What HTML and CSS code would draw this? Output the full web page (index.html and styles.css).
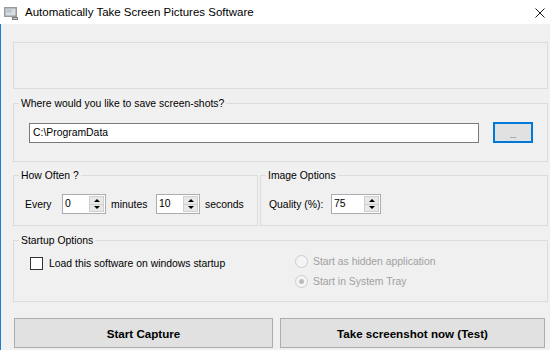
FILE: index.html
```html
<!DOCTYPE html>
<html lang="en">
<head>
    <meta charset="UTF-8">
    <title>Automatically Take Screen Pictures Software</title>
    <link rel="stylesheet" href="styles.css">
</head>
<body>
<div class="window">
    <div class="titlebar">
        <svg class="app-icon" width="16" height="16" viewBox="0 0 16 16">
            <rect x="1" y="2" width="13" height="10" fill="#9a9a9a"/>
            <rect x="2.5" y="3.5" width="10" height="7" fill="#d8dde3"/>
            <rect x="3.5" y="4.5" width="5" height="3" fill="#b9c2cc"/>
            <path d="M9 12 L15 12 L15 15 L9 15 Z" fill="#7d7d7d"/>
            <rect x="10" y="13" width="4" height="1" fill="#c8c8c8"/>
        </svg>
        <span class="title">Automatically Take Screen Pictures Software</span>
        <svg class="close" width="10" height="10" viewBox="0 0 10 10">
            <path d="M0.5 0.5 L9.5 9.5 M9.5 0.5 L0.5 9.5" stroke="#1a1a1a" stroke-width="1"/>
        </svg>
    </div>

    <div class="client">
        <div class="banner"></div>

        <fieldset class="group">
            <legend>Where would you like to save screen-shots?</legend>
            <div class="save-row">
                <div class="textbox">C:\ProgramData</div>
                <button class="browse">...</button>
            </div>
        </fieldset>

        <div class="options">
            <fieldset class="group">
                <legend>How Often ?</legend>
                <div class="often-row">
                    <span>Every</span>
                    <div class="spin"><span class="val">0</span><span class="arrows"><i class="up"></i><i class="down"></i></span></div>
                    <span class="unit">minutes</span>
                    <div class="spin"><span class="val">10</span><span class="arrows"><i class="up"></i><i class="down"></i></span></div>
                    <span class="unit">seconds</span>
                </div>
            </fieldset>
            <fieldset class="group">
                <legend>Image Options</legend>
                <div class="quality-row">
                    <span>Quality (%):</span>
                    <div class="spin"><span class="val">75</span><span class="arrows"><i class="up"></i><i class="down"></i></span></div>
                </div>
            </fieldset>
        </div>

        <fieldset class="group startup">
            <legend>Startup Options</legend>
            <div class="startup-grid">
                <label class="check"><span class="box"></span>Load this software on windows startup</label>
                <div class="radios">
                    <label class="radio"><span class="dot"></span>Start as hidden application</label>
                    <label class="radio checked"><span class="dot"></span>Start in System Tray</label>
                </div>
            </div>
        </fieldset>

        <div class="actions">
            <button class="action">Start Capture</button>
            <button class="action">Take screenshot now (Test)</button>
        </div>
    </div>
</div>
</body>
</html>
```

FILE: styles.css
```css
* {
    margin: 0;
    padding: 0;
    box-sizing: border-box;
}

body {
    font-family: "Liberation Sans", Arial, sans-serif;
    font-size: 10.4px;
    color: #000;
    background: #f0f0f0;
    width: 550px;
    height: 350px;
    overflow: hidden;
}

.window {
    height: 350px;
    display: flex;
    flex-direction: column;
}

.titlebar {
    height: 24px;
    background: white;
    display: flex;
    align-items: center;
    padding-left: 3px;
}

.app-icon {
    margin-right: 6px;
    margin-top: 1px;
}

.title {
    font-size: 11.5px;
    flex: 1;
}

.close {
    margin-right: 5px;
    margin-top: 1px;
}

.client {
    flex: 1;
    border-left: 1px solid #1a7fd4;
    padding: 18px 2px 0 12px;
}

.banner {
    height: 47px;
    border: 1px solid #dcdcdc;
    margin-bottom: 8px;
}

.group {
    border: 1px solid #dcdcdc;
    padding: 0;
    min-width: 0;
}

.group legend {
    margin-left: 5px;
    padding: 0 2px;
    line-height: 13px;
}

.save-row {
    display: flex;
    align-items: center;
    padding: 12px 0 18px 15px;
}

.textbox {
    width: 450px;
    height: 20px;
    border: 1px solid #7a7a7a;
    background: white;
    padding: 3px 0 0 3px;
}

.browse {
    width: 40px;
    height: 21px;
    margin-left: 14px;
    border: 2px solid #0078d7;
    background: #e1e1e1;
    font-family: inherit;
    font-size: 8px;
    padding-top: 5px;
    color: #333;
}

.options {
    display: grid;
    grid-template-columns: 245px 288px;
    column-gap: 2px;
    margin-top: 7px;
}

.often-row {
    display: grid;
    grid-template-columns: 37px 44px 50px 44px auto;
    align-items: center;
    padding: 12px 0 11px 11px;
}

.often-row .unit {
    padding-left: 5px;
}

.quality-row {
    display: grid;
    grid-template-columns: 62px 50px;
    align-items: center;
    padding: 12px 0 11px 8px;
}

.spin {
    height: 20px;
    display: flex;
    border: 1px solid #abadb3;
    background: white;
}

.spin .val {
    flex: 1;
    padding: 3px 0 0 2px;
}

.arrows {
    width: 15px;
    display: flex;
    flex-direction: column;
    margin: 1px;
    background: #e8e8e8;
    border: 1px solid #cfcfcf;
}

.arrows i {
    flex: 1;
    display: flex;
    align-items: center;
    justify-content: center;
}

.arrows i::after {
    content: '';
    border-left: 3px solid transparent;
    border-right: 3px solid transparent;
}

.arrows .up {
    border-bottom: 1px solid #cfcfcf;
}

.arrows .up::after {
    border-bottom: 3px solid #000;
}

.arrows .down::after {
    border-top: 3px solid #000;
}

.startup {
    margin-top: 8px;
}

.startup-grid {
    display: grid;
    grid-template-columns: 265px 1fr;
    padding: 4px 0 10px 16px;
}

.check {
    display: flex;
    align-items: center;
    height: 13px;
    margin-top: 6px;
}

.check .box {
    width: 13px;
    height: 13px;
    border: 1px solid #333;
    background: white;
    margin-right: 6px;
}

.radio {
    display: flex;
    align-items: center;
    height: 20px;
    color: #a0a0a0;
}

.radio .dot {
    width: 13px;
    height: 13px;
    border: 1px solid #cccccc;
    border-radius: 50%;
    background: #f4f4f4;
    margin-right: 5px;
    display: flex;
    align-items: center;
    justify-content: center;
}

.radio.checked .dot::after {
    content: '';
    width: 5px;
    height: 5px;
    border-radius: 50%;
    background: #bcbcbc;
}

.actions {
    display: grid;
    grid-template-columns: 259px 265px;
    column-gap: 7px;
    margin: 16px 0 0 1px;
}

.action {
    height: 30px;
    border: 1px solid #adadad;
    background: #e1e1e1;
    font-family: inherit;
    font-size: 11.6px;
    font-weight: bold;
}
```
